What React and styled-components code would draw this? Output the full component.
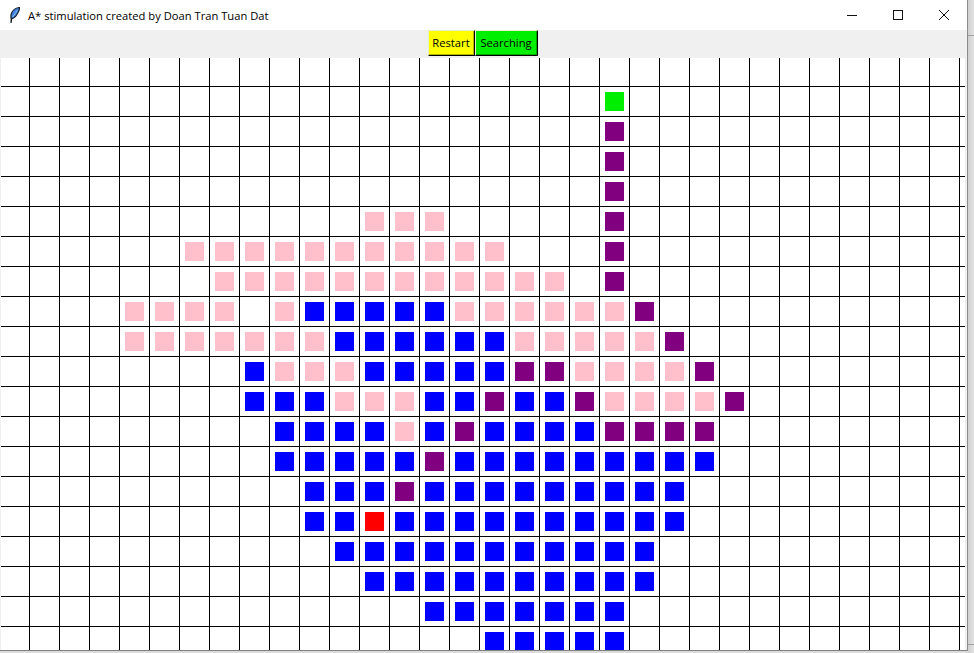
import React from 'react';
import styled, { createGlobalStyle } from 'styled-components';

const UI_FONT = '"Open Sans", "Noto Sans", "Liberation Sans", sans-serif';

// each row lists [first column, last column, kind]
const VISITED = {
  1: [[20, 20, 'start']],
  2: [[20, 20, 'path']],
  3: [[20, 20, 'path']],
  4: [[20, 20, 'path']],
  5: [[12, 14, 'open'], [20, 20, 'path']],
  6: [[6, 16, 'open'], [20, 20, 'path']],
  7: [[7, 18, 'open'], [20, 20, 'path']],
  8: [[4, 7, 'open'], [9, 9, 'open'], [10, 14, 'closed'], [15, 20, 'open'], [21, 21, 'path']],
  9: [[4, 10, 'open'], [11, 16, 'closed'], [17, 21, 'open'], [22, 22, 'path']],
  10: [[8, 8, 'closed'], [9, 11, 'open'], [12, 16, 'closed'], [17, 18, 'path'], [19, 22, 'open'], [23, 23, 'path']],
  11: [[8, 10, 'closed'], [11, 13, 'open'], [14, 15, 'closed'], [16, 16, 'path'], [17, 18, 'closed'], [19, 19, 'path'], [20, 23, 'open'], [24, 24, 'path']],
  12: [[9, 12, 'closed'], [13, 13, 'open'], [14, 14, 'closed'], [15, 15, 'path'], [16, 19, 'closed'], [20, 23, 'path']],
  13: [[9, 13, 'closed'], [14, 14, 'path'], [15, 23, 'closed']],
  14: [[10, 12, 'closed'], [13, 13, 'path'], [14, 22, 'closed']],
  15: [[10, 11, 'closed'], [12, 12, 'end'], [13, 22, 'closed']],
  16: [[11, 21, 'closed']],
  17: [[12, 21, 'closed']],
  18: [[14, 20, 'closed']],
  19: [[16, 20, 'closed']],
};

const COLORS = {
  start: '#00ee00',
  end: '#ff0000',
  path: '#800080',
  open: '#ffc0cb',
  closed: '#0000ff',
};

const COLS = 33;
const ROWS = 20;

const kindAt = (row, col) => {
  const found = (VISITED[row] || []).find(([a, b]) => col >= a && col <= b);
  return found ? found[2] : null;
};

const App = () => {
  const cells = [];
  for (let row = 0; row < ROWS; row++) {
    for (let col = 0; col < COLS; col++) {
      const kind = kindAt(row, col);
      cells.push(<Cell key={`${row}-${col}`}>{kind && <Square $kind={kind} />}</Cell>);
    }
  }

  return (
    <Desktop>
      <GlobalStyle />
      <Window>
        <TitleBar>
          <Feather viewBox="0 0 10 16">
            <path d="M9.4.5C5.8.8 2.2 3.4 1.2 7c-.5 1.8-.3 3.4 0 4.6 2.6-.3 4.6-2 6-4.6C8.5 4.8 10 2.6 9.4.5Z" fill="#3f7fdc" stroke="#141823" strokeWidth="1.1" />
            <path d="M7.4 3.2C5.8 5.4 4.2 7.8 2.8 10" fill="none" stroke="#a9cdf5" strokeWidth=".8" />
            <path d="M1.6 11 1 15.8" fill="none" stroke="#141823" strokeWidth="1.4" />
          </Feather>
          <Title>A* stimulation created by Doan Tran Tuan Dat</Title>
          <Controls>
            <Control>
              <svg width="12" height="10" viewBox="0 0 12 10">
                <path d="M1 5.5h10" stroke="#111" strokeWidth="1" />
              </svg>
            </Control>
            <Control>
              <svg width="10" height="10" viewBox="0 0 10 10">
                <rect x=".5" y=".5" width="9" height="9" fill="none" stroke="#111" strokeWidth="1" />
              </svg>
            </Control>
            <Control>
              <svg width="10" height="10" viewBox="0 0 10 10">
                <path d="M0 0l10 10M10 0L0 10" stroke="#111" strokeWidth="1" />
              </svg>
            </Control>
          </Controls>
        </TitleBar>
        <Toolbar>
          <ToolButton $bg="#ffff00" $shade="#b3b300" $width={47}>Restart</ToolButton>
          <ToolButton $bg="#00ee00" $shade="#00a600" $width={63}>Searching</ToolButton>
        </Toolbar>
        <CanvasFrame>
          <Board>{cells}</Board>
        </CanvasFrame>
      </Window>
      <ShadowStrip>
        <ShadowTick $top={35} />
        <ShadowTick $top={608} />
      </ShadowStrip>
    </Desktop>
  );
};

const GlobalStyle = createGlobalStyle`
  html, body {
    margin: 0;
    padding: 0;
    overflow: hidden;
    background: #dcdcdc;
  }
`;

const Desktop = styled.div`
  display: flex;
  width: 974px;
  height: 653px;
  overflow: hidden;
  font-family: ${UI_FONT};
  color: #000;
`;

const Window = styled.div`
  display: flex;
  flex-direction: column;
  box-sizing: content-box;
  width: 967px;
  height: 650px;
  background: #f0f0f0;
  border-right: 1px solid #8c8c8c;
  border-bottom: 1px solid #808080;
`;

const TitleBar = styled.div`
  display: flex;
  align-items: center;
  height: 30px;
  flex-shrink: 0;
  padding-left: 10px;
  background: #fff;
`;

const Feather = styled.svg`
  width: 10px;
  height: 16px;
  margin-right: 8px;
  flex-shrink: 0;
`;

const Title = styled.span`
  flex: 1;
  font-size: 11.2px;
  white-space: nowrap;
`;

const Controls = styled.div`
  display: flex;
  align-self: stretch;
`;

const Control = styled.div`
  display: flex;
  align-items: center;
  justify-content: center;
  width: 46px;
`;

const Toolbar = styled.div`
  display: flex;
  justify-content: center;
  align-items: flex-start;
  height: 28px;
  padding-right: 1px;
  flex-shrink: 0;
`;

const ToolButton = styled.div`
  display: flex;
  align-items: center;
  justify-content: center;
  box-sizing: border-box;
  width: ${(p) => p.$width}px;
  height: 26px;
  padding: 0 1px 2px 0;
  font-size: 11.2px;
  background: ${(p) => p.$bg};
  border: 1px solid #000;
  border-top-color: #e8f0c8;
  border-left-color: #e8f0c8;
  box-shadow: inset -1px -1px 0 ${(p) => p.$shade};
`;

const CanvasFrame = styled.div`
  flex: 1;
  min-height: 0;
  padding: 0 2px 0 1px;
`;

const Board = styled.div`
  display: grid;
  grid-template-columns: 29px repeat(${COLS - 1}, 30px);
  grid-template-rows: 29px repeat(${ROWS - 1}, 30px);
  height: 100%;
  overflow: hidden;
  background: #fff;
`;

const Cell = styled.div`
  display: flex;
  align-items: center;
  justify-content: center;
  box-sizing: border-box;
  border-right: 1px solid #000;
  border-bottom: 1px solid #000;
`;

const Square = styled.div`
  width: 19px;
  height: 19px;
  background: ${(p) => COLORS[p.$kind]};
`;

const ShadowStrip = styled.div`
  flex: 1;
  background: linear-gradient(to right, #cfcfcf, #e2e2e2);
`;

const ShadowTick = styled.div`
  height: 1px;
  margin-top: ${(p) => p.$top}px;
  background: #a0a0a0;
`;

export default App;
